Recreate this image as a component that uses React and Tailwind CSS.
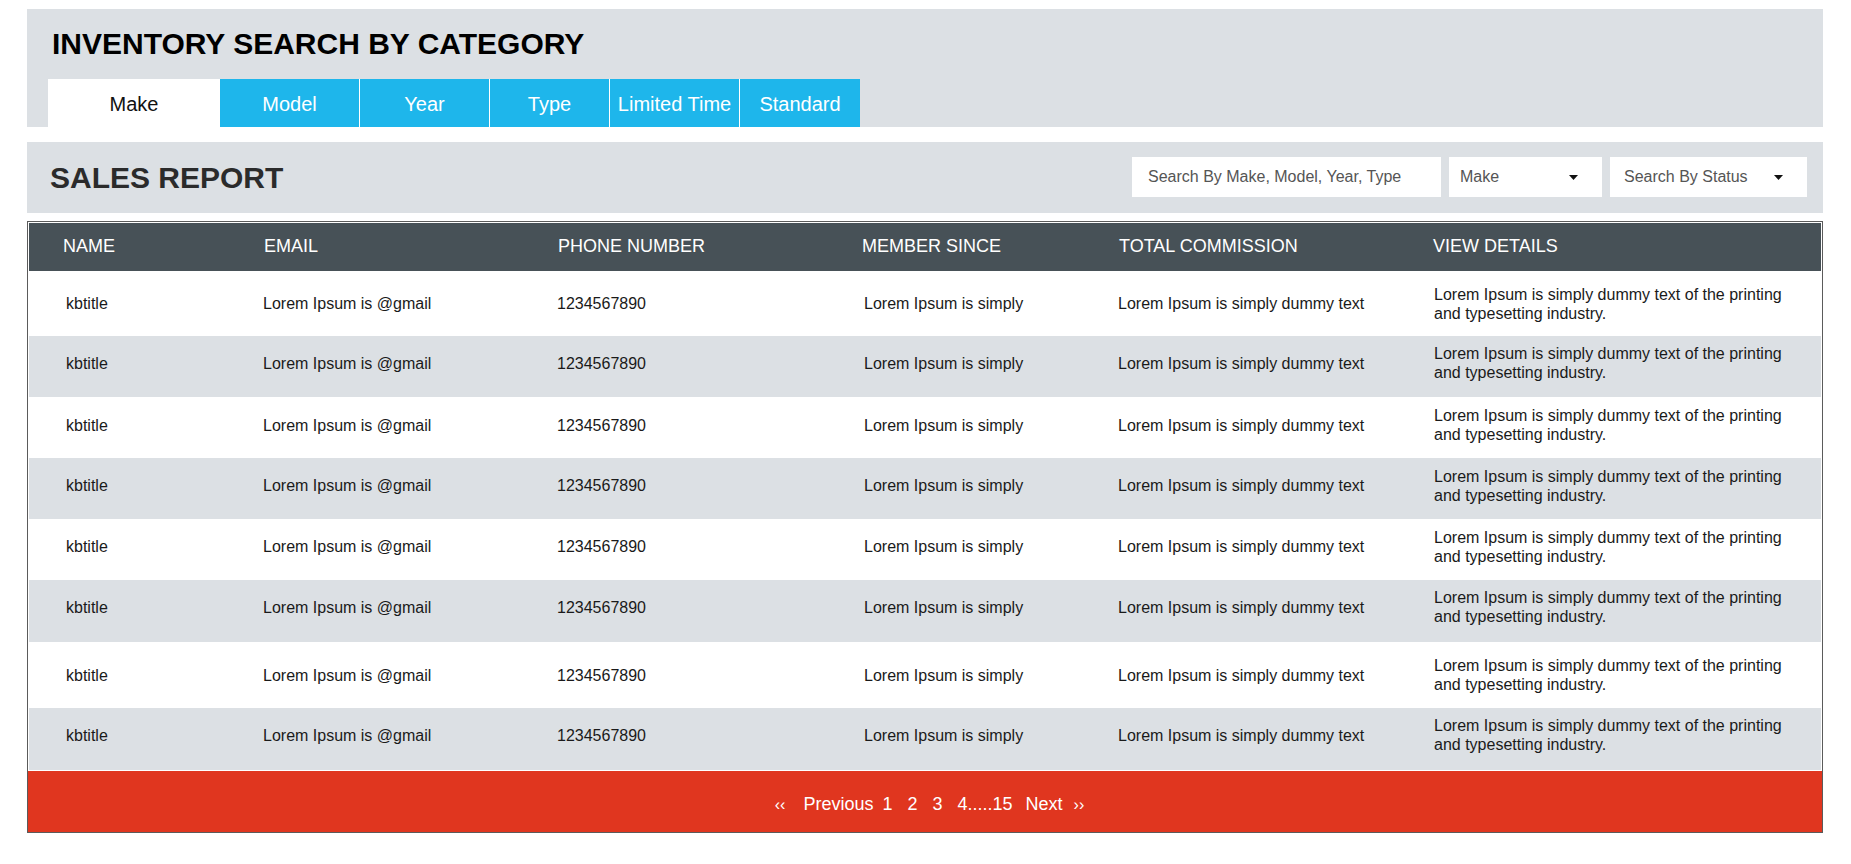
const rows = [
  { h: "h-[65px]", pad: "" },
  { h: "h-[61px]", pad: "pb-[7px]" },
  { h: "h-[61px]", pad: "pb-[5px]" },
  { h: "h-[61px]", pad: "pb-[6px]" },
  { h: "h-[61px]", pad: "pb-[6px]" },
  { h: "h-[62px]", pad: "pb-[8px]" },
  { h: "h-[66px]", pad: "" },
  { h: "h-[62px]", pad: "pb-[8px]" },
];

function Caret() {
  return (
    <svg width="9" height="5" viewBox="0 0 9 5" className="shrink-0">
      <path d="M0 0 L9 0 L4.5 5 Z" fill="#111" />
    </svg>
  );
}

export default function App() {
  return (
    <div className="min-h-[864px] bg-white pl-[27px] pr-[28px] pt-[9px] font-['Liberation_Sans',Arial,Helvetica,sans-serif] text-[#1a1a1a]">
      {/* Inventory search panel */}
      <div className="bg-[#dce0e4] pl-[21px] pt-[17px]">
        <h1 className="h-[36px] pl-[4px] text-[30px] font-bold leading-[36px] text-black">
          INVENTORY SEARCH BY CATEGORY
        </h1>
        <div className="mt-[17px] flex h-[48px] text-[20px] text-white">
          <div className="flex w-[172px] items-center justify-center bg-white pt-[2px] text-[#111]">Make</div>
          <div className="flex w-[139px] items-center justify-center bg-[#1eb6eb] pt-[2px]">Model</div>
          <div className="flex w-[130px] items-center justify-center border-l border-white bg-[#1eb6eb] pt-[2px]">Year</div>
          <div className="flex w-[120px] items-center justify-center border-l border-white bg-[#1eb6eb] pt-[2px]">Type</div>
          <div className="flex w-[130px] items-center justify-center border-l border-white bg-[#1eb6eb] pt-[2px]">Limited Time</div>
          <div className="flex w-[121px] items-center justify-center border-l border-white bg-[#1eb6eb] pt-[2px]">Standard</div>
        </div>
      </div>

      {/* Sales report header */}
      <div className="mt-[15px] flex h-[71px] items-center justify-between bg-[#dce0e4] pl-[23px] pr-[16px]">
        <h2 className="text-[30px] font-bold leading-[36px] text-[#2b2b2b]">SALES REPORT</h2>
        <div className="flex items-center gap-[8px] pb-[1px] text-[16px] text-[#555]">
          <div className="flex h-[40px] w-[309px] items-center bg-white pl-[16px]">Search By Make, Model, Year, Type</div>
          <div className="flex h-[40px] w-[153px] items-center justify-between bg-white pl-[11px] pr-[24px]">
            <span>Make</span>
            <Caret />
          </div>
          <div className="flex h-[40px] w-[197px] items-center justify-between bg-white pl-[14px] pr-[24px]">
            <span>Search By Status</span>
            <Caret />
          </div>
        </div>
      </div>

      {/* Table */}
      <div className="mt-[8px] border border-[#5b5b5b]">
        <div className="p-[1px]">
          <div className="grid h-[48px] grid-cols-[234px_294px_305px_256px_315px_1fr] items-center bg-[#475157] pb-[2px] text-[18px] text-white">
            <div className="pl-[34px]">NAME</div>
            <div className="pl-[1px]">EMAIL</div>
            <div className="pl-[1px]">PHONE NUMBER</div>
            <div className="pl-0">MEMBER SINCE</div>
            <div className="pl-[1px]">TOTAL COMMISSION</div>
            <div className="pl-0">VIEW DETAILS</div>
          </div>
          {rows.map((r, i) => (
            <div
              key={i}
              className={`grid ${r.h} ${r.pad} grid-cols-[234px_294px_305px_256px_315px_1fr] items-center text-[16px] leading-[19px] text-[#1a1a1a] ${i % 2 === 1 ? "bg-[#dce0e4]" : "bg-white"}`}
            >
              <div className="pl-[37px]">kbtitle</div>
              <div>Lorem Ipsum is @gmail</div>
              <div className="pl-[-1px]">1234567890</div>
              <div className="pl-[2px]">Lorem Ipsum is simply</div>
              <div>Lorem Ipsum is simply dummy text</div>
              <div className="w-[365px] pl-[1px]">
                Lorem Ipsum is simply dummy text of the printing and typesetting industry.
              </div>
            </div>
          ))}
        </div>
        <div className="flex h-[61px] items-center justify-center bg-[#e0361f] pl-[9px] pt-[6px] text-[18px] text-white">
          <span className="text-[16px]">‹‹</span>
          <span className="ml-[18px]">Previous</span>
          <span className="ml-[9px]">1</span>
          <span className="ml-[15px]">2</span>
          <span className="ml-[15px]">3</span>
          <span className="ml-[15px]">4.....15</span>
          <span className="ml-[13px]">Next</span>
          <span className="ml-[11px] text-[16px]">››</span>
        </div>
      </div>
    </div>
  );
}
